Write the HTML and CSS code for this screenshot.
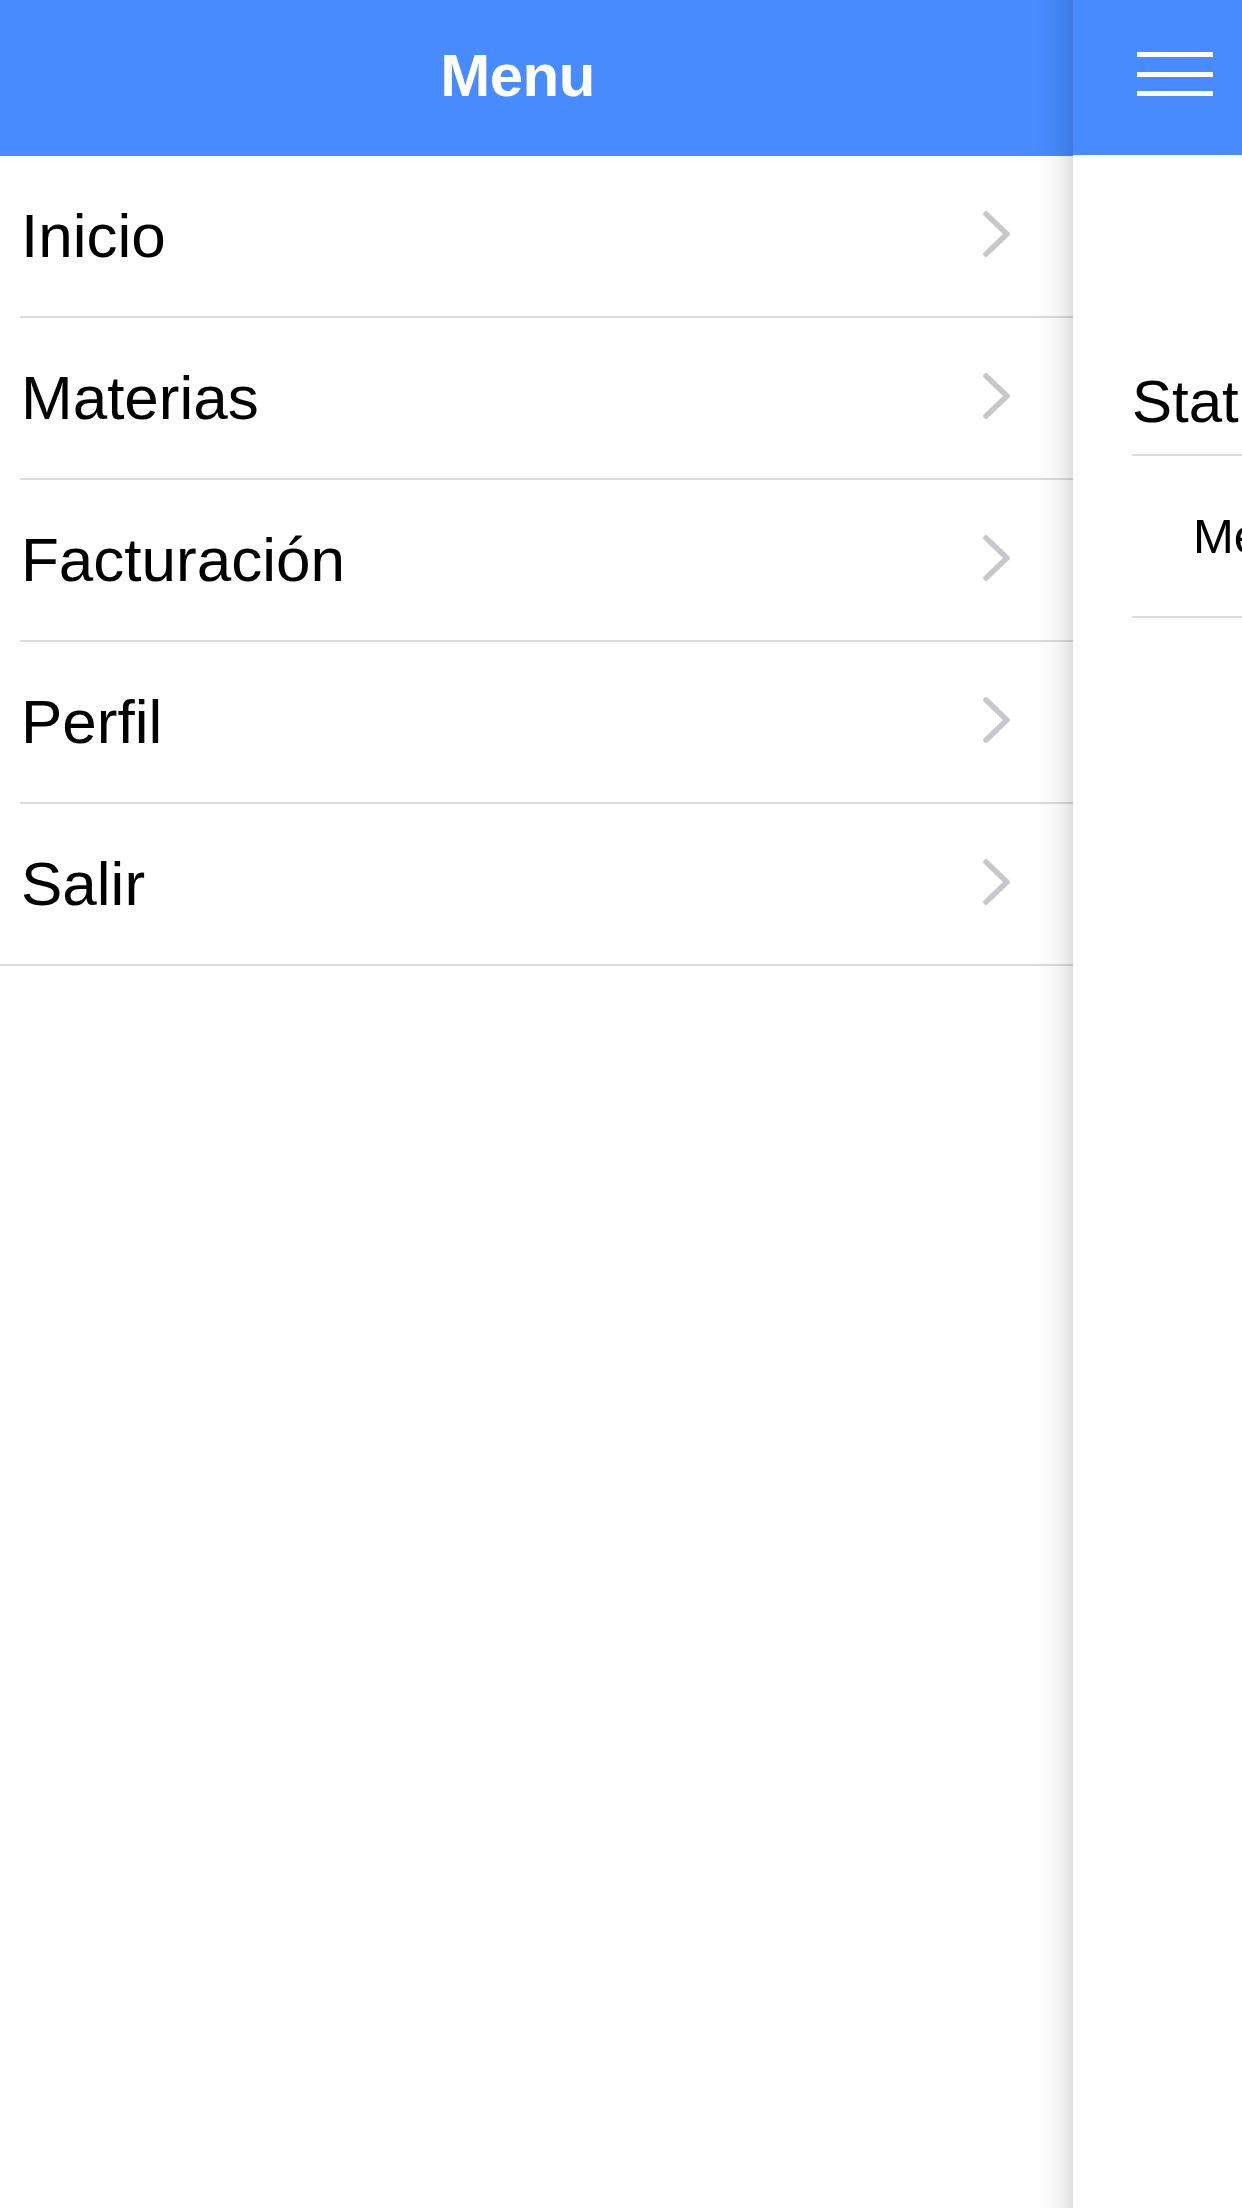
FILE: index.html
```html
<!DOCTYPE html>
<html lang="es">
<head>
<meta charset="utf-8">
<title>Menu</title>
<link rel="stylesheet" href="styles.css">
</head>
<body>
<div class="app">
  <aside class="menu">
    <header class="menu-header">
      <h1 class="menu-title">Menu</h1>
    </header>
    <ul class="menu-list">
      <li class="menu-item"><div class="menu-item-inner"><span class="menu-label">Inicio</span><svg class="chevron" width="29" height="48" viewBox="0 0 29 48"><polyline points="4,4 25,24 4,44" fill="none" stroke="#c7c7cc" stroke-width="5.5" stroke-linecap="round" stroke-linejoin="round"/></svg></div></li>
      <li class="menu-item"><div class="menu-item-inner"><span class="menu-label">Materias</span><svg class="chevron" width="29" height="48" viewBox="0 0 29 48"><polyline points="4,4 25,24 4,44" fill="none" stroke="#c7c7cc" stroke-width="5.5" stroke-linecap="round" stroke-linejoin="round"/></svg></div></li>
      <li class="menu-item"><div class="menu-item-inner"><span class="menu-label">Facturación</span><svg class="chevron" width="29" height="48" viewBox="0 0 29 48"><polyline points="4,4 25,24 4,44" fill="none" stroke="#c7c7cc" stroke-width="5.5" stroke-linecap="round" stroke-linejoin="round"/></svg></div></li>
      <li class="menu-item"><div class="menu-item-inner"><span class="menu-label">Perfil</span><svg class="chevron" width="29" height="48" viewBox="0 0 29 48"><polyline points="4,4 25,24 4,44" fill="none" stroke="#c7c7cc" stroke-width="5.5" stroke-linecap="round" stroke-linejoin="round"/></svg></div></li>
      <li class="menu-item last"><div class="menu-item-inner"><span class="menu-label">Salir</span><svg class="chevron" width="29" height="48" viewBox="0 0 29 48"><polyline points="4,4 25,24 4,44" fill="none" stroke="#c7c7cc" stroke-width="5.5" stroke-linecap="round" stroke-linejoin="round"/></svg></div></li>
    </ul>
  </aside>
  <main class="content">
    <header class="content-header">
      <svg class="hamburger" width="76" height="45" viewBox="0 0 76 45"><rect x="0" y="0" width="76" height="5" fill="#fff"/><rect x="0" y="20" width="76" height="5" fill="#fff"/><rect x="0" y="39" width="76" height="5" fill="#fff"/></svg>
    </header>
    <section class="content-body">
      <h2 class="section-title">Statistics</h2>
      <div class="section-item">Mensajes</div>
    </section>
  </main>
</div>
</body>
</html>
```

FILE: styles.css
```css
html, body {
  margin: 0;
  padding: 0;
  background: #fff;
}
body {
  font-family: "Liberation Sans", Arial, sans-serif;
  color: #000;
  width: 1242px;
  height: 2208px;
  overflow: hidden;
}
.app {
  display: flex;
  width: 1242px;
  height: 2208px;
}
.menu {
  flex: 0 0 1073px;
  width: 1073px;
  display: flex;
  flex-direction: column;
  background: #fff;
}
.menu-header {
  height: 155px;
  background: #488aff;
  display: flex;
  align-items: center;
  justify-content: center;
  padding-right: 38px;
  padding-bottom: 4px;
  box-sizing: border-box;
}
.menu-title {
  margin: 0;
  font-size: 60px;
  font-weight: 700;
  color: #fff;
  letter-spacing: -0.5px;
}
.menu-list {
  list-style: none;
  margin: 0;
  padding: 0;
  border-top: 1px solid #488aff;
}
.menu-item {
  padding-left: 20px;
}
.menu-item.last {
  border-bottom: 2px solid #dcdcdc;
}
.menu-item-inner {
  height: 160px;
  display: flex;
  align-items: center;
  justify-content: space-between;
  padding-left: 1px;
  padding-right: 62px;
  border-bottom: 2px solid #dcdcdc;
}
.menu-item.last .menu-item-inner {
  border-bottom: none;
}
.menu-label {
  font-size: 62px;
  line-height: 1;
}
.chevron {
  display: block;
  margin-top: -4px;
}
.content {
  flex: 1 1 auto;
  position: relative;
  z-index: 1;
  background: #fff;
  overflow: visible;
  min-width: 0;
}
.content::before {
  content: "";
  position: absolute;
  top: 0;
  bottom: 0;
  right: 100%;
  width: 36px;
  background: linear-gradient(to right, rgba(0,0,0,0), rgba(0,0,0,0.045) 60%, rgba(0,0,0,0.12));
}
.content-header {
  height: 155px;
  background: #488aff;
  display: flex;
  align-items: center;
  padding-left: 64px;
  padding-bottom: 6px;
  box-sizing: border-box;
}
.hamburger {
  display: block;
}
.content-body {
  padding-left: 59px;
  overflow: hidden;
  white-space: nowrap;
}
.section-title {
  margin: 212px 0 0;
  font-size: 60px;
  font-weight: 400;
  line-height: 70px;
  padding-bottom: 17px;
  border-bottom: 2px solid #dcdcdc;
}
.section-item {
  height: 160px;
  display: flex;
  align-items: center;
  padding-left: 61px;
  font-size: 49px;
  border-bottom: 2px solid #dcdcdc;
}
```
